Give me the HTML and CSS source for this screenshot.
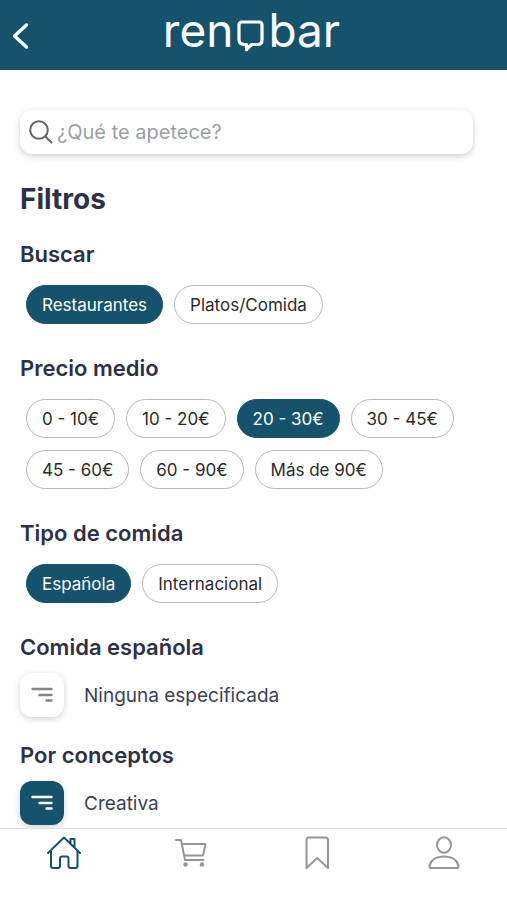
FILE: index.html
```html
<!DOCTYPE html>
<html lang="es">
<head>
<meta charset="utf-8">
<meta name="viewport" content="width=device-width, initial-scale=1">
<title>Renobar</title>
<link rel="stylesheet" href="styles.css">
</head>
<body>
<header class="topbar">
  <button class="back" type="button" aria-label="Volver">
    <svg width="18" height="28" viewBox="0 0 18 28"><path d="M14.500 3 2.500 14 14.500 25" fill="none" stroke="currentColor" stroke-width="3.400" stroke-linecap="round" stroke-linejoin="round"/></svg>
  </button>
  <div class="logo">
    <span>ren</span>
    <svg class="bubble" width="27" height="32" viewBox="0 0 27 32" aria-hidden="true"><path d="M5 2H22Q25 2 25 5V20Q25 24.500 21 24.500H14.500L9.500 29.500V24.500H7Q2 24 2 20V5Q2 2 5 2Z" fill="none" stroke="currentColor" stroke-width="3.200" stroke-linejoin="round"/></svg>
    <span>bar</span>
  </div>
</header>

<main class="content">
  <label class="search">
    <svg width="24" height="24" viewBox="0 0 24 24" aria-hidden="true"><circle cx="10" cy="10" r="8.800"/><path d="m16.500 16.500 6 6"/></svg>
    <input type="search" placeholder="¿Qué te apetece?" aria-label="Buscar comida">
  </label>

  <h1>Filtros</h1>

  <section>
    <h2>Buscar</h2>
    <div class="chips">
      <button class="chip" type="button" aria-pressed="true">Restaurantes</button>
      <button class="chip" type="button" aria-pressed="false">Platos/Comida</button>
    </div>
  </section>

  <section>
    <h2>Precio medio</h2>
    <div class="chips">
      <button class="chip" type="button" aria-pressed="false">0 - 10€</button>
      <button class="chip" type="button" aria-pressed="false">10 - 20€</button>
      <button class="chip" type="button" aria-pressed="true">20 - 30€</button>
      <button class="chip" type="button" aria-pressed="false">30 - 45€</button>
      <button class="chip" type="button" aria-pressed="false">45 - 60€</button>
      <button class="chip" type="button" aria-pressed="false">60 - 90€</button>
      <button class="chip" type="button" aria-pressed="false">Más de 90€</button>
    </div>
  </section>

  <section>
    <h2>Tipo de comida</h2>
    <div class="chips">
      <button class="chip" type="button" aria-pressed="true">Española</button>
      <button class="chip" type="button" aria-pressed="false">Internacional</button>
    </div>
  </section>

  <section class="picker">
    <h2>Comida española</h2>
    <button class="option" type="button">
      <span class="tile"><svg width="22" height="16" viewBox="0 0 22 16"><path d="M1.500 2H20.500M8.500 8H20.500M15.500 13.500H20.500"/></svg></span>
      Ninguna especificada
    </button>
  </section>

  <section class="picker">
    <h2>Por conceptos</h2>
    <button class="option" type="button">
      <span class="tile tile-on"><svg width="22" height="16" viewBox="0 0 22 16"><path d="M1.500 2H20.500M8.500 8H20.500M15.500 13.500H20.500"/></svg></span>
      Creativa
    </button>
  </section>
</main>

<nav class="tabs">
  <a class="current" href="#inicio" aria-label="Inicio">
    <svg width="36" height="36" viewBox="0 0 36 36"><path d="M3 18 19 2.500 35 18M6 16V31Q6 33 8 33H13Q15 33 15 31V23.500Q15 21.500 17 21.500H21.500Q23.500 21.500 23.500 23.500V31Q23.500 33 25.500 33H30.500Q32.500 33 32.500 31V16M25.500 8.500V4H29.500V12.500"/></svg>
  </a>
  <a href="#carrito" aria-label="Carrito">
    <svg width="36" height="36" viewBox="0 0 36 36"><path d="M4 5H9L13 25H31.500M10 9H33.500L31 20.500H12.500"/><circle class="wheel" cx="13.500" cy="29.500" r="2.200"/><circle class="wheel" cx="30" cy="29.500" r="2.200"/></svg>
  </a>
  <a href="#guardados" aria-label="Guardados">
    <svg width="36" height="36" viewBox="0 0 36 36"><path d="M7.500 33V5Q7.500 2.500 10 2.500H26.500Q29 2.500 29 5V33L18.200 23Z"/></svg>
  </a>
  <a href="#perfil" aria-label="Perfil">
    <svg width="36" height="36" viewBox="0 0 36 36"><ellipse cx="18" cy="10" rx="7" ry="7.800"/><path d="M4.500 33Q3.500 33 3.500 31C4.500 25 10 21.500 18 21.500S31.500 25 32.500 31Q32.500 33 31.500 33Z"/></svg>
  </a>
</nav>
</body>
</html>
```
FILE: styles.css
```css
:root {
  --brand: #15536c;
  --heading: #2d3148;
  --muted: #969696;
}

* {
  box-sizing: border-box;
}

body {
  margin: 0;
  height: 100vh;
  display: flex;
  flex-direction: column;
  background: #fff;
  color: var(--heading);
  font-family: Inter, "Liberation Sans", sans-serif;
}

button {
  font: inherit;
  cursor: pointer;
}

svg {
  display: block;
  flex: none;
}

.topbar {
  flex: none;
  display: grid;
  grid-template-columns: 48px 1fr 52px;
  height: 70px;
  background: var(--brand);
  color: #fff;
}

.back {
  display: flex;
  align-items: center;
  padding: 2px 0 0 12px;
  border: 0;
  background: none;
  color: inherit;
}

.logo {
  display: flex;
  justify-content: center;
  align-items: flex-start;
  gap: 4px;
  padding-top: 2px;
  font-size: 46px;
  font-weight: 400;
  line-height: 56px;
}

.bubble {
  margin-top: 18px;
}

.content {
  flex: 1;
  min-height: 0;
  overflow: hidden;
  padding: 40px 20px 0;
}

.search {
  display: flex;
  align-items: center;
  gap: 4px;
  height: 44px;
  margin-right: 14px;
  padding: 0 9px;
  border-radius: 12px;
  box-shadow: 0 2px 6px rgb(0 0 0 / 20%);
}

.search svg {
  fill: none;
  stroke: #666;
  stroke-width: 2;
  stroke-linecap: round;
}

.search input {
  flex: 1;
  min-width: 0;
  padding: 0;
  border: 0;
  outline: 0;
  background: none;
  color: var(--heading);
  font: inherit;
  font-size: 20px;
}

.search input::placeholder {
  color: #9a9fa3;
}

h1 {
  margin: 29px 0 25px;
  font-size: 28px;
  font-weight: 700;
  line-height: 32px;
}

h2 {
  margin: 0 0 17px;
  font-size: 22px;
  font-weight: 600;
  line-height: 28px;
}

section {
  margin-bottom: 30px;
}

.chips {
  display: flex;
  flex-wrap: wrap;
  gap: 12px 11px;
  padding: 0 6px;
}

.chip {
  height: 39px;
  padding: 0 15px;
  border: 1px solid #b8b8b8;
  border-radius: 20px;
  background: #fff;
  color: #2b2b2b;
  font-size: 17px;
}

.chip[aria-pressed="true"] {
  border-color: var(--brand);
  background: var(--brand);
  color: #fff;
}

.picker {
  margin-bottom: 24px;
}

.picker h2 {
  margin-bottom: 12px;
}

.option {
  display: flex;
  align-items: center;
  gap: 20px;
  padding: 0;
  border: 0;
  background: none;
  color: #3d4153;
  font-size: 19px;
}

.tile {
  display: grid;
  place-items: center;
  width: 44px;
  height: 44px;
  border-radius: 12px;
  background: #fff;
  color: #858585;
  box-shadow: 0 2px 6px rgb(0 0 0 / 18%);
}

.tile svg {
  fill: none;
  stroke: currentColor;
  stroke-width: 2.400;
  stroke-linecap: round;
}

.tile-on {
  background: var(--brand);
  color: #fff;
}

.tabs {
  flex: none;
  display: grid;
  grid-template-columns: repeat(4, 1fr);
  height: 72px;
  padding-top: 6px;
  border-top: 1px solid #e2e2e2;
  background: #fff;
}

.tabs a {
  display: flex;
  justify-content: center;
  align-items: flex-start;
  color: var(--muted);
}

.tabs svg {
  fill: none;
  stroke: currentColor;
  stroke-width: 2;
  stroke-linecap: round;
  stroke-linejoin: round;
}

.tabs .wheel {
  fill: currentColor;
  stroke: none;
}

.tabs .current {
  color: var(--brand);
}
```
